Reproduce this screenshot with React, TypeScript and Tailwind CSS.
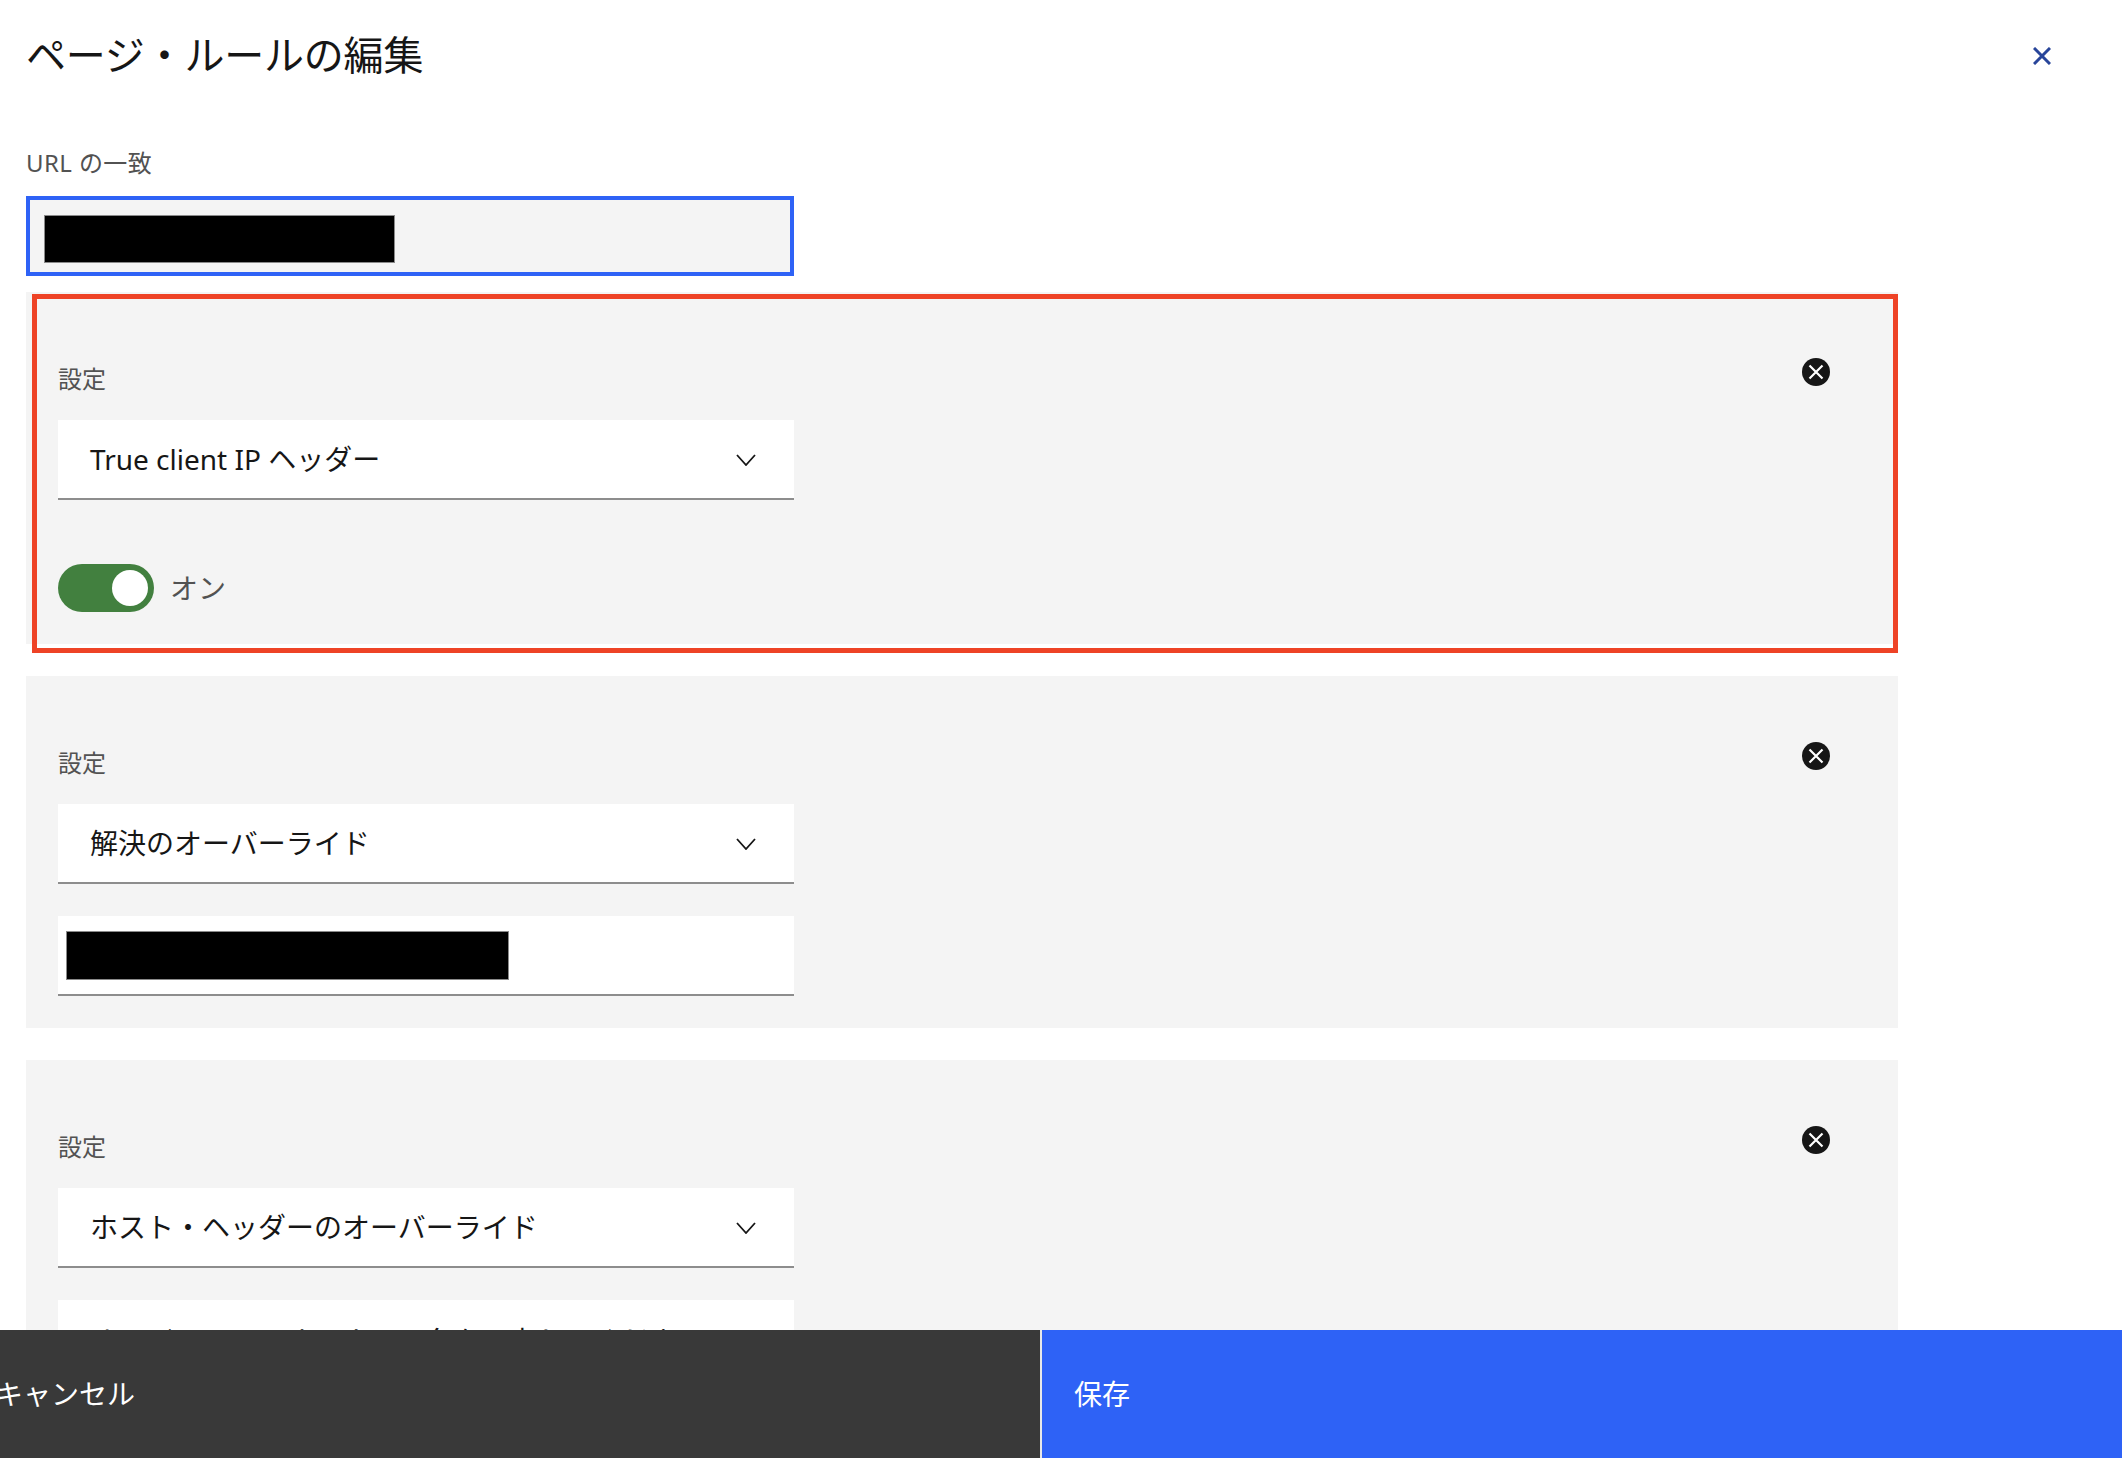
import React from 'react';

function Chevron() {
  return (
    <svg width="20" height="12" viewBox="0 0 20 12" fill="none" className="mt-[2px] shrink-0">
      <path d="M1 1l9 10 9-10" stroke="#161616" strokeWidth="1.8" />
    </svg>
  );
}

function RemoveButton() {
  return (
    <button className="mt-[66px] mr-[68px] shrink-0">
      <svg width="28" height="28" viewBox="0 0 28 28" className="block">
        <circle cx="14" cy="14" r="14" fill="#161616" />
        <path d="M7.5 7.5l13 13M20.5 7.5l-13 13" stroke="#ffffff" strokeWidth="2.2" />
      </svg>
    </button>
  );
}

function Select({ value }: { value: string }) {
  return (
    <div className="flex h-20 w-[736px] items-center justify-between border-b-2 border-[#8d8d8d] bg-white pl-8 pr-[38px]">
      <span className="text-[28px] text-[#161616]">{value}</span>
      <Chevron />
    </div>
  );
}

function Panel({ value, children }: { value: string; children: React.ReactNode }) {
  return (
    <section className="relative flex w-[1872px] items-start justify-between bg-[#f4f4f4]">
      <div className="pl-8 pt-[71px] pb-8">
        <div className="mb-[25px] h-8 text-2xl leading-8 text-[#525252]">設定</div>
        <Select value={value} />
        {children}
      </div>
      <RemoveButton />
    </section>
  );
}

export default function App() {
  return (
    <div className="flex h-[1458px] flex-col overflow-hidden bg-white font-['Noto_Sans','Noto_Sans_CJK_JP',sans-serif]">
      {/* Form */}
      <main className="min-h-0 flex-1 overflow-hidden pl-[26px]">
        <header className="flex h-[110px] items-center justify-between pr-[71px]">
          <h1 className="text-[40px] font-normal tracking-[-0.2px] text-[#161616]">ページ・ルールの編集</h1>
          <svg width="18" height="18" viewBox="0 0 18 18" className="mt-[2px] block">
            <path d="M1 1l16 16M17 1L1 17" stroke="#28459a" strokeWidth="3" />
          </svg>
        </header>

        <label className="mt-[37px] block h-8 text-2xl leading-8 tracking-[0.4px] text-[#525252]">URL の一致</label>
        <div className="mt-[17px] flex h-20 w-[768px] items-start border-4 border-[#2e62f6] bg-[#f4f4f4] pl-[14px] pt-[15px]">
          <div className="h-12 w-[351px] border border-[#8a8a8a] bg-black" />
        </div>

        <div className="mt-4 flex flex-col gap-8">
          <Panel value="True client IP ヘッダー">
            <div className="mt-16 flex items-center gap-4">
              <div className="flex h-12 w-24 items-center justify-end rounded-full bg-[#42803f] pr-[6px]">
                <div className="h-9 w-9 rounded-full bg-white" />
              </div>
              <span className="text-[28px] text-[#525252]">オン</span>
            </div>
            {/* annotation frame */}
            <div className="pointer-events-none absolute left-[6px] top-[2px] h-[359px] w-[1866px] border-[5px] border-[#ee4326]" />
          </Panel>

          <Panel value="解決のオーバーライド">
            <div className="mt-8 flex h-20 w-[736px] items-center border-b-2 border-[#8d8d8d] bg-white pl-2">
              <div className="mt-[1px] h-[49px] w-[443px] border border-[#8a8a8a] bg-black" />
            </div>
          </Panel>

          <Panel value="ホスト・ヘッダーのオーバーライド">
            <div className="mt-8 flex h-20 w-[736px] items-center border-b-2 border-[#8d8d8d] bg-white pl-8 pt-[3px] text-[28px] text-[#161616]">
              オーバーライドするホスト名を入力してください
            </div>
          </Panel>
        </div>
      </main>

      {/* Actions */}
      <footer className="flex h-32 shrink-0 text-[28px] text-white">
        <button className="flex w-[1040px] items-center bg-[#393939] text-left">
          <span className="ml-[-5px]">キャンセル</span>
        </button>
        <button className="flex flex-1 items-center border-l-2 border-[#e8e8e8] bg-[#2e62f6] pl-8 text-left">
          保存
        </button>
      </footer>
    </div>
  );
}
